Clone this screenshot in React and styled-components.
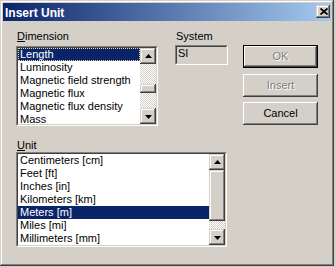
import styled, { createGlobalStyle } from "styled-components"

const GlobalStyle = createGlobalStyle`
  html, body {
    margin: 0;
    padding: 0;
    background: #d4d0c8;
  }
  body {
    font-family: "Liberation Sans", Arial, sans-serif;
    font-size: 11px;
    color: #000;
  }
  * { box-sizing: border-box; }
`

const raised = `
  background: #d4d0c8;
  box-shadow: inset -1px -1px #404040, inset 1px 1px #d4d0c8,
    inset -2px -2px #808080, inset 2px 2px #ffffff;
`

const Window = styled.div`
  width: 334px;
  height: 266px;
  padding: 3px;
  background: #d4d0c8;
  box-shadow: inset -1px -1px #404040, inset 1px 1px #d4d0c8,
    inset -2px -2px #808080, inset 2px 2px #ffffff;
  display: flex;
  flex-direction: column;
`

const TitleBar = styled.div`
  height: 18px;
  display: flex;
  align-items: flex-start;
  background: linear-gradient(to right, #0a246a, #a6caf0);
`

const Title = styled.div`
  flex: 1;
  padding: 1px 0 0 2px;
  line-height: 18px;
  font-size: 12px;
  font-weight: bold;
  color: #fff;
`

const CloseButton = styled.div`
  ${raised}
  width: 14px;
  height: 13px;
  margin: 2px 1px 0 0;
  display: flex;
  align-items: center;
  justify-content: center;
  padding-left: 1px;
`

const Body = styled.div`
  padding: 9px 0 0 13px;
  display: flex;
  flex-direction: column;
`

const TopRow = styled.div`
  display: flex;
  align-items: flex-start;
`

const Column = styled.div`
  display: flex;
  flex-direction: column;
  width: ${p => p.$w}px;
  margin-left: ${p => p.$ml || 0}px;
`

const Label = styled.div`
  line-height: 13px;
  padding-left: 1px;
  margin-top: ${p => p.$mt || 0}px;
  margin-bottom: ${p => p.$mb || 0}px;
`

const Sunken = styled.div`
  width: ${p => p.$w}px;
  height: ${p => p.$h}px;
  border: 1px solid;
  border-color: #808080 #ffffff #ffffff #808080;
`

const SunkenInner = styled.div`
  height: 100%;
  border: 1px solid;
  border-color: #404040 #d4d0c8 #d4d0c8 #404040;
  background: ${p => p.$bg || "#fff"};
  display: flex;
  overflow: hidden;
`

const Items = styled.div`
  flex: 1;
  min-width: 0;
  overflow: hidden;
`

const Item = styled.div`
  height: 13px;
  line-height: 13px;
  padding: 0 2px;
  white-space: nowrap;
  background: ${p => (p.$selected ? "#0a246a" : "transparent")};
  color: ${p => (p.$selected ? "#fff" : "#000")};
  outline: ${p => (p.$focused ? "1px dotted #f5db95" : "none")};
  outline-offset: -1px;
`

const ScrollBar = styled.div`
  width: 16px;
  display: flex;
  flex-direction: column;
`

const ArrowButton = styled.div`
  ${raised}
  height: 16px;
  flex: none;
  display: flex;
  align-items: center;
  justify-content: center;
`

const Track = styled.div`
  flex: 1;
  background: repeating-conic-gradient(#ffffff 0 25%, #d4d0c8 0 50%) 0 0 / 2px 2px;
`

const Thumb = styled.div`
  ${raised}
  height: ${p => p.$size}px;
  margin-top: ${p => p.$top}px;
`

const TextBox = styled.div`
  line-height: 13px;
  padding: 0 1px;
`

const Buttons = styled.div`
  display: flex;
  flex-direction: column;
  gap: 5px;
  margin: 15px 0 0 15px;
`

const Button = styled.div`
  width: 75px;
  height: 23px;
  display: flex;
  align-items: center;
  justify-content: center;
  padding-bottom: 1px;
  background: #d4d0c8;
  color: ${p => (p.$disabled ? "#808080" : "#000")};
  text-shadow: ${p => (p.$disabled ? "1px 1px #ffffff" : "none")};
  border: ${p => (p.$default ? "1px solid #000" : "none")};
  margin-bottom: ${p => (p.$default ? 1 : 0)}px;
  box-shadow: inset -1px -1px #404040, inset 1px 1px #ffffff,
    inset -2px -2px #808080, inset 2px 2px #d4d0c8;
`

const Arrow = ({ up }) => (
  <svg width="7" height="4" viewBox="0 0 7 4" style={{ marginTop: up ? -1 : 1 }}>
    <polygon points={up ? "3.5,0 7,4 0,4" : "0,0 7,0 3.5,4"} fill="#000" />
  </svg>
)

const Scroll = ({ top, size }) => (
  <ScrollBar>
    <ArrowButton>
      <Arrow up />
    </ArrowButton>
    <Track>
      <Thumb $top={top} $size={size} />
    </Track>
    <ArrowButton>
      <Arrow />
    </ArrowButton>
  </ScrollBar>
)

const ListBox = ({ w, h, items, selected, focused, thumbTop, thumbSize }) => (
  <Sunken $w={w} $h={h}>
    <SunkenInner>
      <Items>
        {items.map(item => (
          <Item
            key={item}
            $selected={item === selected}
            $focused={focused && item === selected}
          >
            {item}
          </Item>
        ))}
      </Items>
      <Scroll top={thumbTop} size={thumbSize} />
    </SunkenInner>
  </Sunken>
)

const dimensions = [
  "Length",
  "Luminosity",
  "Magnetic field strength",
  "Magnetic flux",
  "Magnetic flux density",
  "Mass",
]

const units = [
  "Centimeters [cm]",
  "Feet [ft]",
  "Inches [in]",
  "Kilometers [km]",
  "Meters [m]",
  "Miles [mi]",
  "Millimeters [mm]",
]

const App = () => {
  return (
    <>
      <GlobalStyle />
      <Window>
        <TitleBar>
          <Title>Insert Unit</Title>
          <CloseButton>
            <svg width="8" height="7" viewBox="0 0 8 7">
              <path d="M0.5 0.5L7.5 6.5M7.5 0.5L0.5 6.5" stroke="#000" strokeWidth="1.7" />
            </svg>
          </CloseButton>
        </TitleBar>
        <Body>
          <TopRow>
            <Column $w={142}>
              <Label $mb={3}>
                <u>D</u>imension
              </Label>
              <ListBox
                w={142}
                h={80}
                items={dimensions}
                selected="Length"
                focused
                thumbTop={20}
                thumbSize={9}
              />
            </Column>
            <Column $w={53} $ml={17}>
              <Label $mb={2}>System</Label>
              <Sunken $w={53} $h={20}>
                <SunkenInner $bg="#d4d0c8">
                  <TextBox>SI</TextBox>
                </SunkenInner>
              </Sunken>
            </Column>
            <Buttons>
              <Button $default $disabled>OK</Button>
              <Button $disabled>Insert</Button>
              <Button>Cancel</Button>
            </Buttons>
          </TopRow>
          <Label $mt={13}>
            <u>U</u>nit
          </Label>
          <ListBox
            w={211}
            h={95}
            items={units}
            selected="Meters [m]"
            thumbTop={0}
            thumbSize={51}
          />
        </Body>
      </Window>
    </>
  )
}

export default App
